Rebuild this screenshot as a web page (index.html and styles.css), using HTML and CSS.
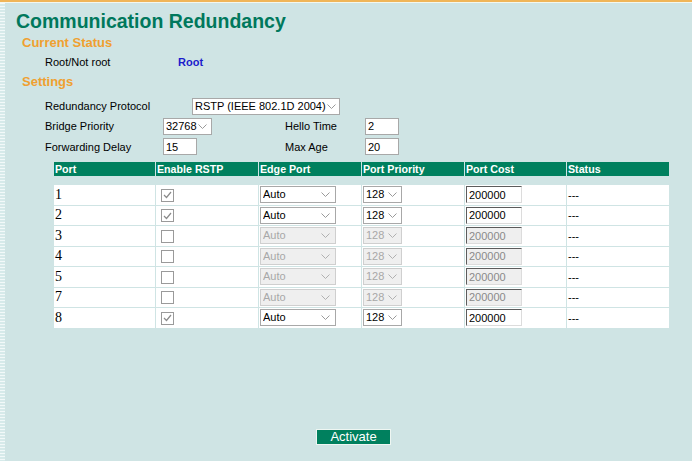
FILE: index.html
```html
<!DOCTYPE html>
<html>
<head>
<meta charset="utf-8">
<title>Communication Redundancy</title>
<link rel="stylesheet" href="styles.css">
</head>
<body>
<div class="frame">
  <div class="edge"></div>
  <div class="main">
    <h1 class="title">Communication Redundancy</h1>
    <h2 class="section">Current Status</h2>
    <div class="status-row"><span class="status-label">Root/Not root</span><span class="root">Root</span></div>
    <h2 class="section">Settings</h2>
    <div class="settings">
      <div class="srow srow-1">
        <span class="slabel slabel-wide">Redundancy Protocol</span>
        <span class="sel sel-proto"><select><option>RSTP (IEEE 802.1D 2004)</option></select><svg class="chev" width="9" height="5" viewBox="0 0 9 5"><polyline points="0.5,0.5 4.5,4.5 8.5,0.5" fill="none" stroke="#9a9a9a" stroke-width="1"/></svg></span>
      </div>
      <div class="srow srow-2">
        <span class="slabel">Bridge Priority</span>
        <span class="scell"><span class="sel sel-bridge"><select><option>32768</option></select><svg class="chev" width="9" height="5" viewBox="0 0 9 5"><polyline points="0.5,0.5 4.5,4.5 8.5,0.5" fill="none" stroke="#9a9a9a" stroke-width="1"/></svg></span></span>
        <span class="slabel slabel-2">Hello Time</span>
        <input class="txt txt-small" type="text" value="2">
      </div>
      <div class="srow srow-3">
        <span class="slabel">Forwarding Delay</span>
        <span class="scell"><input class="txt txt-small" type="text" value="15"></span>
        <span class="slabel slabel-2">Max Age</span>
        <input class="txt txt-small" type="text" value="20">
      </div>
    </div>

    <table class="ports">
      <colgroup>
        <col class="c1"><col class="c2"><col class="c3"><col class="c4"><col class="c5"><col class="c6">
      </colgroup>
      <thead>
        <tr class="head">
          <th>Port</th><th>Enable RSTP</th><th>Edge Port</th><th>Port Priority</th><th>Port Cost</th><th>Status</th>
        </tr>
        <tr class="spacer"><td></td><td></td><td></td><td></td><td></td><td></td></tr>
      </thead>
      <tbody>
        <tr>
          <td class="pnum">1</td>
          <td><span class="cb on"><svg width="9" height="8" viewBox="0 0 9 8"><polyline points="1,4 3.5,6.5 8,1" fill="none" stroke="#8a8a8a" stroke-width="1.2"/></svg></span></td>
          <td><span class="sel sel-edge"><select><option>Auto</option></select><svg class="chev" width="9" height="5" viewBox="0 0 9 5"><polyline points="0.5,0.5 4.5,4.5 8.5,0.5" fill="none" stroke="#9a9a9a" stroke-width="1"/></svg></span></td>
          <td><span class="sel sel-prio"><select><option>128</option></select><svg class="chev" width="9" height="5" viewBox="0 0 9 5"><polyline points="0.5,0.5 4.5,4.5 8.5,0.5" fill="none" stroke="#9a9a9a" stroke-width="1"/></svg></span></td>
          <td><input class="txt cost" type="text" value="200000"></td>
          <td class="stat">---</td>
        </tr>
        <tr>
          <td class="pnum">2</td>
          <td><span class="cb on"><svg width="9" height="8" viewBox="0 0 9 8"><polyline points="1,4 3.5,6.5 8,1" fill="none" stroke="#8a8a8a" stroke-width="1.2"/></svg></span></td>
          <td><span class="sel sel-edge"><select><option>Auto</option></select><svg class="chev" width="9" height="5" viewBox="0 0 9 5"><polyline points="0.5,0.5 4.5,4.5 8.5,0.5" fill="none" stroke="#9a9a9a" stroke-width="1"/></svg></span></td>
          <td><span class="sel sel-prio"><select><option>128</option></select><svg class="chev" width="9" height="5" viewBox="0 0 9 5"><polyline points="0.5,0.5 4.5,4.5 8.5,0.5" fill="none" stroke="#9a9a9a" stroke-width="1"/></svg></span></td>
          <td><input class="txt cost" type="text" value="200000"></td>
          <td class="stat">---</td>
        </tr>
        <tr>
          <td class="pnum">3</td>
          <td><span class="cb"></span></td>
          <td><span class="sel sel-edge dis"><select disabled><option>Auto</option></select><svg class="chev" width="9" height="5" viewBox="0 0 9 5"><polyline points="0.5,0.5 4.5,4.5 8.5,0.5" fill="none" stroke="#b0b0b0" stroke-width="1"/></svg></span></td>
          <td><span class="sel sel-prio dis"><select disabled><option>128</option></select><svg class="chev" width="9" height="5" viewBox="0 0 9 5"><polyline points="0.5,0.5 4.5,4.5 8.5,0.5" fill="none" stroke="#b0b0b0" stroke-width="1"/></svg></span></td>
          <td><input class="txt cost" type="text" value="200000" disabled></td>
          <td class="stat">---</td>
        </tr>
        <tr>
          <td class="pnum">4</td>
          <td><span class="cb"></span></td>
          <td><span class="sel sel-edge dis"><select disabled><option>Auto</option></select><svg class="chev" width="9" height="5" viewBox="0 0 9 5"><polyline points="0.5,0.5 4.5,4.5 8.5,0.5" fill="none" stroke="#b0b0b0" stroke-width="1"/></svg></span></td>
          <td><span class="sel sel-prio dis"><select disabled><option>128</option></select><svg class="chev" width="9" height="5" viewBox="0 0 9 5"><polyline points="0.5,0.5 4.5,4.5 8.5,0.5" fill="none" stroke="#b0b0b0" stroke-width="1"/></svg></span></td>
          <td><input class="txt cost" type="text" value="200000" disabled></td>
          <td class="stat">---</td>
        </tr>
        <tr>
          <td class="pnum">5</td>
          <td><span class="cb"></span></td>
          <td><span class="sel sel-edge dis"><select disabled><option>Auto</option></select><svg class="chev" width="9" height="5" viewBox="0 0 9 5"><polyline points="0.5,0.5 4.5,4.5 8.5,0.5" fill="none" stroke="#b0b0b0" stroke-width="1"/></svg></span></td>
          <td><span class="sel sel-prio dis"><select disabled><option>128</option></select><svg class="chev" width="9" height="5" viewBox="0 0 9 5"><polyline points="0.5,0.5 4.5,4.5 8.5,0.5" fill="none" stroke="#b0b0b0" stroke-width="1"/></svg></span></td>
          <td><input class="txt cost" type="text" value="200000" disabled></td>
          <td class="stat">---</td>
        </tr>
        <tr>
          <td class="pnum">7</td>
          <td><span class="cb"></span></td>
          <td><span class="sel sel-edge dis"><select disabled><option>Auto</option></select><svg class="chev" width="9" height="5" viewBox="0 0 9 5"><polyline points="0.5,0.5 4.5,4.5 8.5,0.5" fill="none" stroke="#b0b0b0" stroke-width="1"/></svg></span></td>
          <td><span class="sel sel-prio dis"><select disabled><option>128</option></select><svg class="chev" width="9" height="5" viewBox="0 0 9 5"><polyline points="0.5,0.5 4.5,4.5 8.5,0.5" fill="none" stroke="#b0b0b0" stroke-width="1"/></svg></span></td>
          <td><input class="txt cost" type="text" value="200000" disabled></td>
          <td class="stat">---</td>
        </tr>
        <tr>
          <td class="pnum">8</td>
          <td><span class="cb on"><svg width="9" height="8" viewBox="0 0 9 8"><polyline points="1,4 3.5,6.5 8,1" fill="none" stroke="#8a8a8a" stroke-width="1.2"/></svg></span></td>
          <td><span class="sel sel-edge"><select><option>Auto</option></select><svg class="chev" width="9" height="5" viewBox="0 0 9 5"><polyline points="0.5,0.5 4.5,4.5 8.5,0.5" fill="none" stroke="#9a9a9a" stroke-width="1"/></svg></span></td>
          <td><span class="sel sel-prio"><select><option>128</option></select><svg class="chev" width="9" height="5" viewBox="0 0 9 5"><polyline points="0.5,0.5 4.5,4.5 8.5,0.5" fill="none" stroke="#9a9a9a" stroke-width="1"/></svg></span></td>
          <td><input class="txt cost" type="text" value="200000"></td>
          <td class="stat">---</td>
        </tr>
      </tbody>
    </table>

    <div class="actions"><button class="activate" type="button">Activate</button></div>
  </div>
</div>
</body>
</html>
```
FILE: styles.css
```css
* { box-sizing: border-box; }
html, body { margin: 0; padding: 0; }
body {
  background: #cfe4e4;
  font-family: "Liberation Sans", Arial, sans-serif;
  font-size: 11px;
  color: #000;
  border-top: 2px solid #f0b558;
  height: 461px;
  overflow: hidden;
}
.frame {
  display: flex;
  min-height: 459px;
  border-top: 1px solid #f3f7ee;
}
.edge {
  flex: none;
  width: 5px;
  background: repeating-linear-gradient(to bottom, #f2f9f9 0 1px, #d6eaea 1px 3px);
}
.main { flex: 1; }

.title {
  margin: 6px 0 0 11px;
  font-size: 19.5px;
  line-height: 24px;
  font-weight: bold;
  color: #00785c;
}
.section {
  margin: 2px 0 0 17px;
  font-size: 13px;
  line-height: 16px;
  font-weight: bold;
  color: #f0a030;
}
.status-row {
  display: flex;
  margin: 4px 0 0 40px;
  line-height: 14px;
  height: 14px;
}
.status-label { width: 133px; }
.root { color: #1c1ccc; font-weight: bold; }
.status-row + .section { margin-top: 5px; }

.settings { margin: 6px 0 0 40px; }
.srow { display: flex; align-items: center; }
.srow-1 { height: 20px; }
.srow-2 { height: 20px; }
.srow-3 { height: 21px; }
.slabel { width: 118px; flex: none; }
.slabel-wide { width: 147px; }
.scell { width: 122px; flex: none; display: flex; align-items: center; }
.slabel-2 { width: 80px; }

.sel {
  display: inline-flex;
  align-items: center;
  height: 17px;
  border: 1px solid #a8a8a8;
  background: #fff;
  flex: none;
}
.sel select {
  appearance: none;
  -webkit-appearance: none;
  border: 0;
  background: transparent;
  font-family: "Liberation Sans", Arial, sans-serif;
  font-size: 11px;
  color: #000;
  padding: 0 0 0 2px;
  margin: 0;
  height: 15px;
  line-height: 15px;
  flex: 1;
  min-width: 0;
  outline: none;
}
.sel .chev { flex: none; margin: 0 5px 0 2px; }
.sel.dis { background: #efefef; border-color: #cfcfcf; }
.sel.dis select { color: #8a8a8a; }
.sel-proto { width: 148px; }
.sel-proto .chev { margin: 0 3px 0 0; }
.sel-bridge { width: 49px; }
.sel-edge { width: 76px; }
.sel-prio { width: 39px; }
.sel-prio .chev, .sel-bridge .chev { margin: 0 4px 0 0; }

.txt {
  height: 17px;
  border: 1px solid #a8a8a8;
  background: #fff;
  font-family: "Liberation Sans", Arial, sans-serif;
  font-size: 11px;
  padding: 0 0 0 2px;
  margin: 0;
  color: #000;
  outline: none;
}
.txt-small { width: 34px; }
.cost {
  width: 56px;
  border-top-color: #5c5c5c;
  border-left-color: #5c5c5c;
  border-right-color: #dcdcdc;
  border-bottom-color: #dcdcdc;
}
.cost:disabled { background: #efefef; color: #8a8a8a; }

.ports {
  margin: 4px 0 0 48px;
  border-collapse: separate;
  border-spacing: 1px;
  table-layout: fixed;
  width: 617px;
}
.c1 { width: 101px; }
.c2 { width: 102px; }
.c3 { width: 102px; }
.c4 { width: 102px; }
.c5 { width: 101px; }
.c6 { width: 102px; }
.head th {
  background: #00805e;
  color: #fff;
  font-size: 10.67px;
  font-weight: bold;
  text-align: left;
  height: 14px;
  padding: 0 0 0 1px;
  line-height: 14px;
}
.spacer td { height: 7px; padding: 0; }
.ports tbody td {
  background: #fff;
  height: 19.5px;
  padding: 0 0 0 1px;
  vertical-align: middle;
}
.ports tbody td.pnum {
  font-family: "Liberation Serif", "Times New Roman", serif;
  font-size: 14px;
  padding-left: 1px;
}
.ports tbody td .sel, .ports tbody td .txt { vertical-align: middle; }
.cb {
  display: inline-flex;
  align-items: center;
  justify-content: center;
  width: 13px;
  height: 13px;
  margin-left: 4px;
  border: 1px solid #9a9a9a;
  background: #fff;
  vertical-align: middle;
}
.stat { font-size: 11px; }

.actions { margin: 100px 0 0 311px; }
.activate {
  width: 75px;
  height: 16px;
  padding: 0;
  border: 1px solid #eef6f2;
  background: #00805e;
  color: #fff;
  font-family: "Liberation Sans", Arial, sans-serif;
  font-size: 13px;
  line-height: 14px;
}
```
